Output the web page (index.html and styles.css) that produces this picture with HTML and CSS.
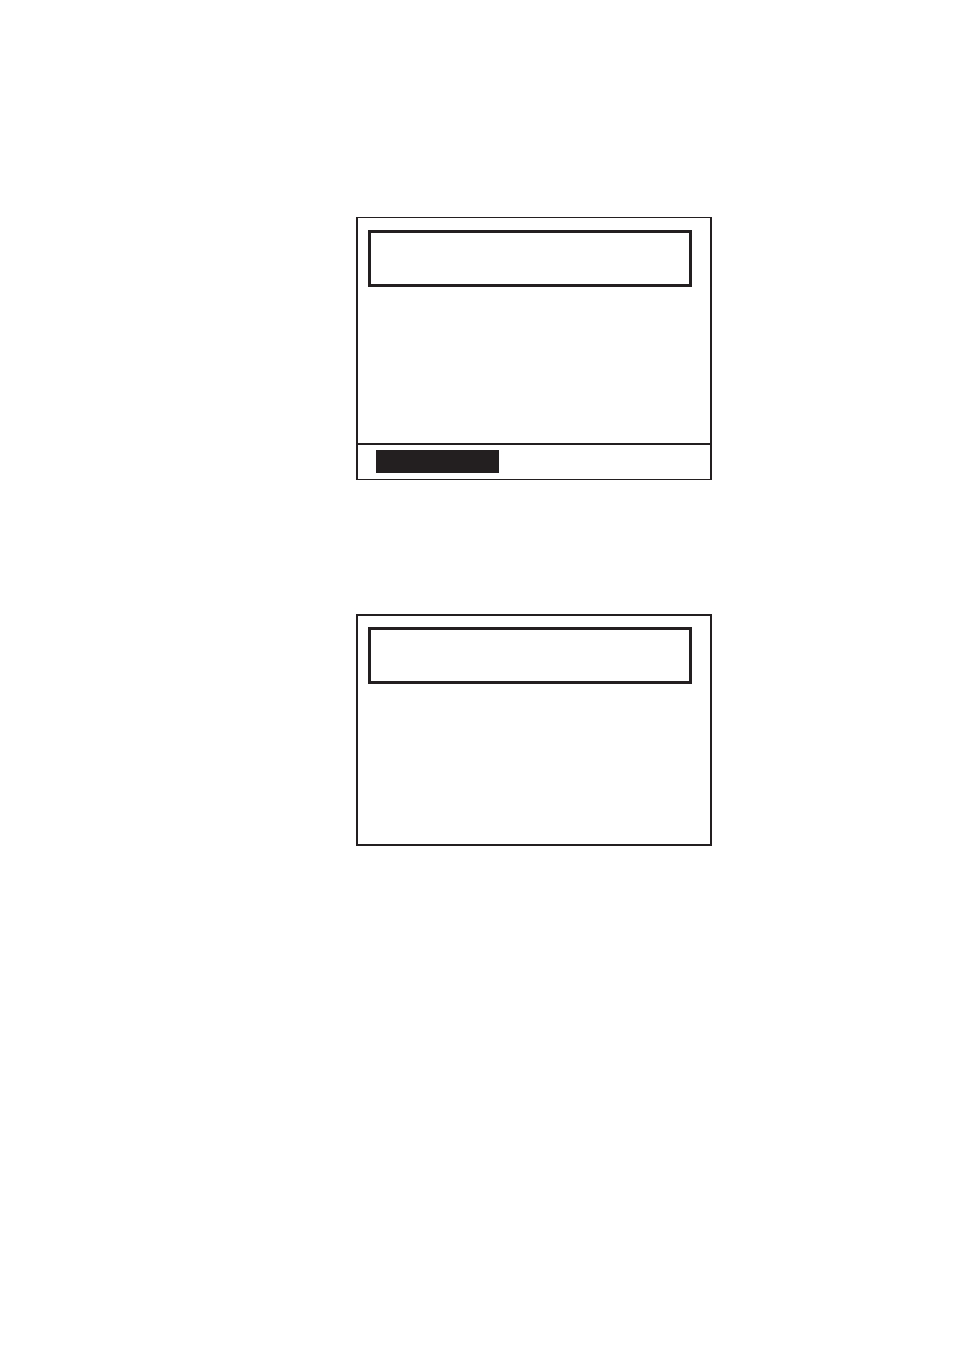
FILE: index.html
```
<!DOCTYPE html>
<html lang="en">
<head>
    <meta charset="utf-8">
    <title>Display screens</title>
    <link rel="stylesheet" href="styles.css">
</head>
<body>

<main class="page">
    <!-- Screen with softkey bar -->
    <section class="screen screen-softkeys">
        <div class="screen-body">
            <div class="field"></div>
        </div>
        <div class="softkeys">
            <div class="softkey-selected"></div>
        </div>
    </section>

    <!-- Screen without softkeys -->
    <section class="screen">
        <div class="screen-body">
            <div class="field"></div>
        </div>
    </section>
</main>

</body>
</html>
```

FILE: styles.css
```
* {
    box-sizing: border-box;
}

body {
    margin: 0;
    background-color: #fff;
    color: #231f20;
    font-family: "Liberation Sans", Arial, sans-serif;
}

.page {
    display: flex;
    flex-direction: column;
    gap: 134px;
    padding: 217px 242px 217px 356px;
}

.screen {
    border: 2px solid #231f20;
}

.screen-body {
    min-height: 228px;
    padding: 11px 18px 11px 10px;
}

.field {
    height: 57px;
    border: 3px solid #231f20;
}

.screen-softkeys {
    border-top-width: 1px;
    border-bottom-width: 1px;
}

.screen-softkeys .screen-body {
    min-height: 225px;
    padding-top: 12px;
}

.softkeys {
    border-top: 2px solid #231f20;
    padding: 5px 18px 6px;
}

.softkey-selected {
    width: 123px;
    height: 23px;
    background-color: #231f20;
}
```
